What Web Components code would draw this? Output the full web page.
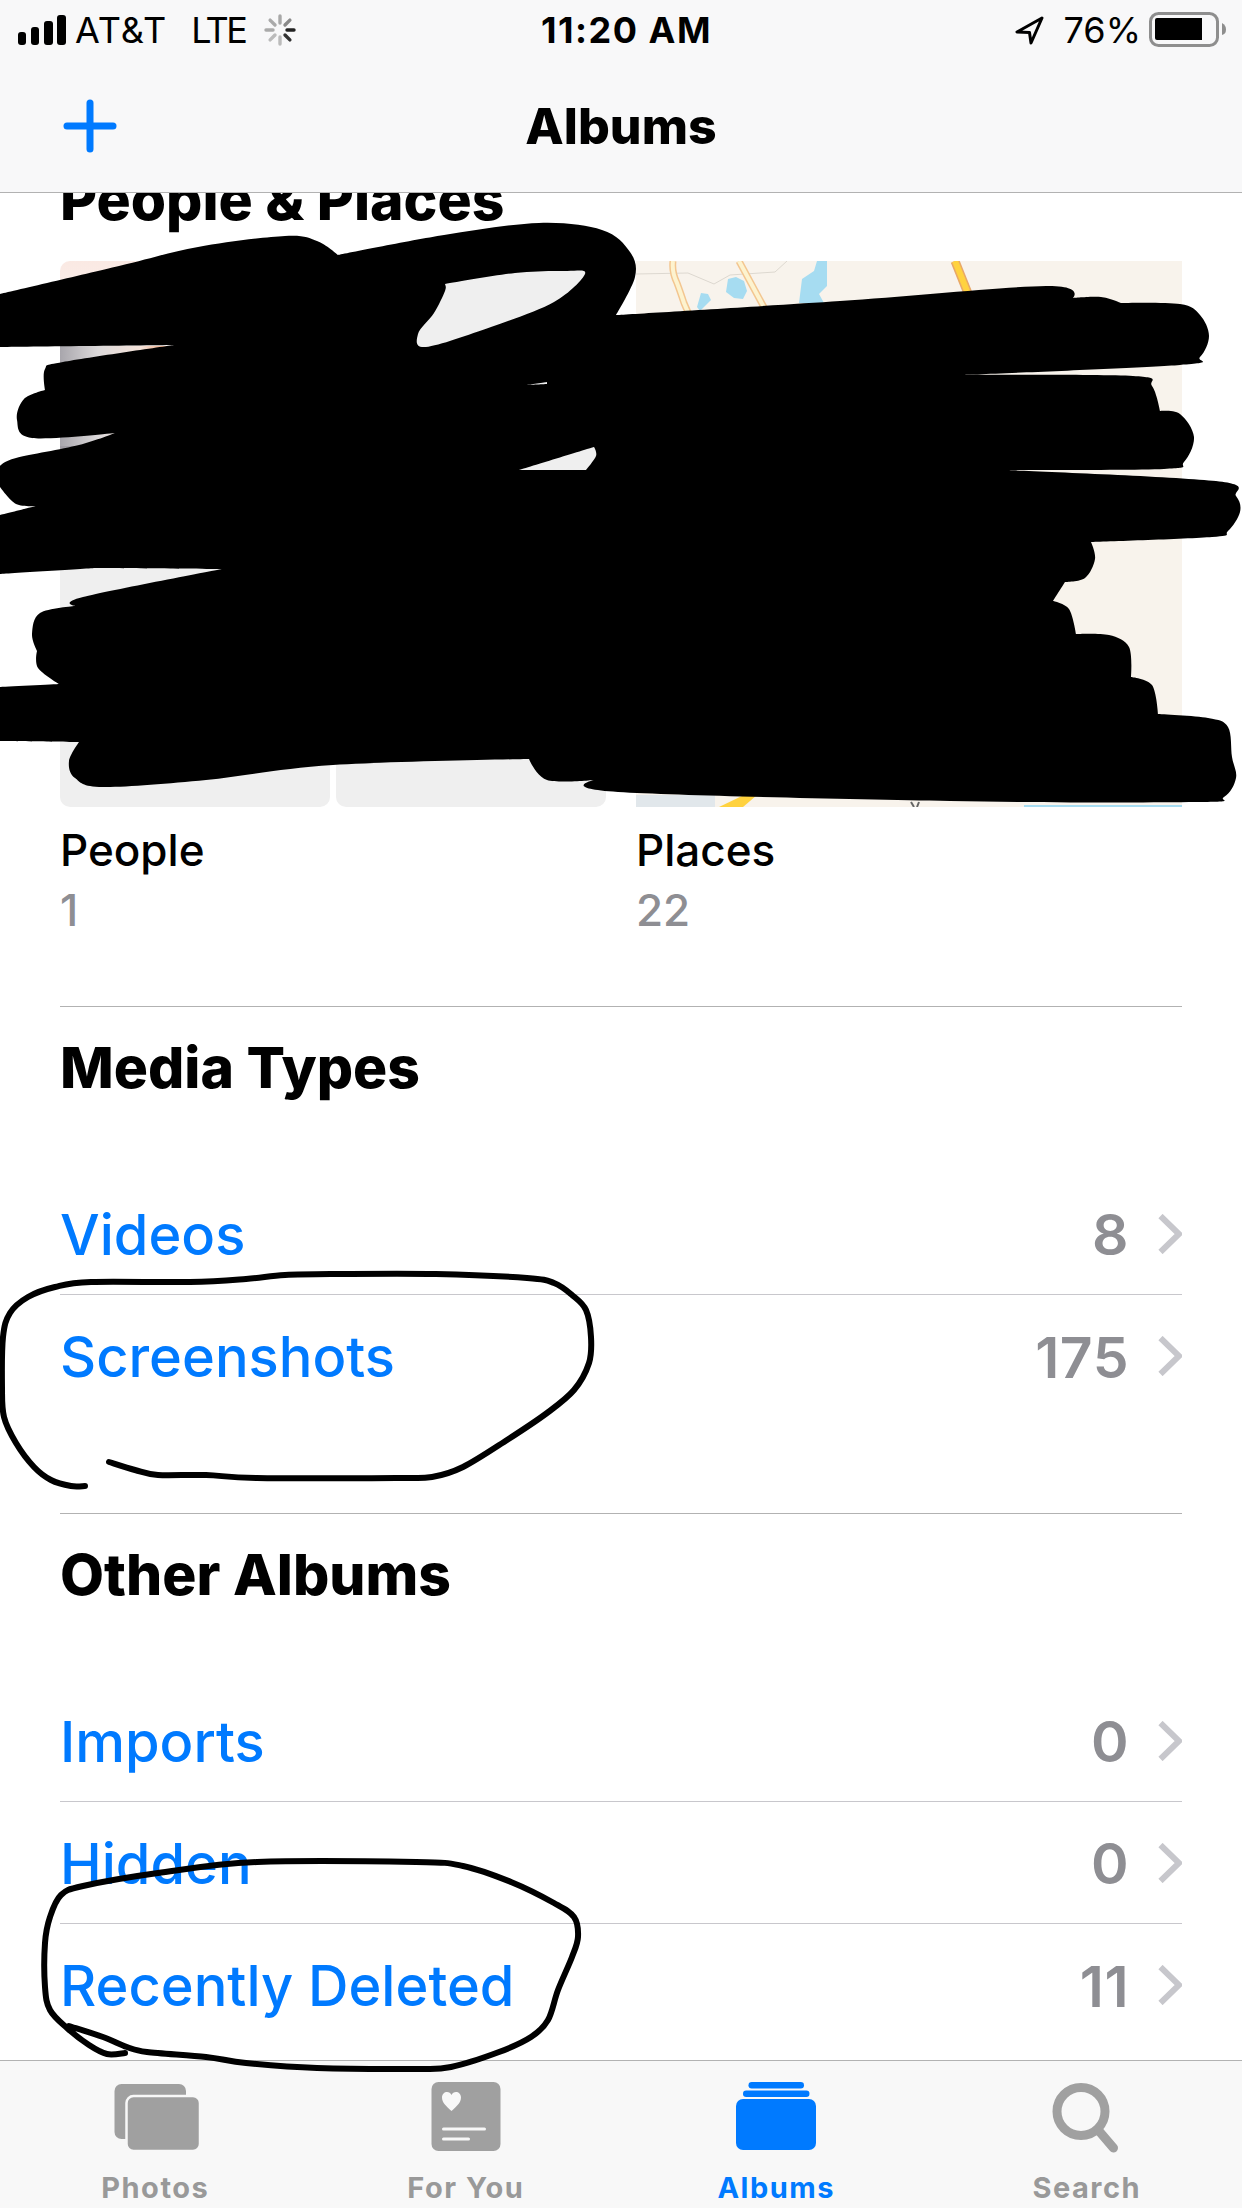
<!DOCTYPE html>
<html lang="en">
<head>
<meta charset="utf-8">
<title>Albums</title>
<style>
    html, body { margin: 0; padding: 0; background: #fff; }
    body { width: 1242px; height: 2208px; overflow: hidden; position: relative; display: flex; flex-direction: column; font-family: Inter, "Liberation Sans", sans-serif; }
</style>
</head>
<body>
<app-header>Albums</app-header>

<album-list>
    <album-group heading="People &amp; Places" first>
        <album-card name="People" count="1"><people-thumb></people-thumb></album-card>
        <album-card name="Places" count="22"><map-thumb></map-thumb></album-card>
    </album-group>
    <album-rows heading="Media Types" class="media">
        <album-row name="Videos" count="8"></album-row>
        <album-row name="Screenshots" count="175" last></album-row>
    </album-rows>
    <album-rows heading="Other Albums">
        <album-row name="Imports" count="0"></album-row>
        <album-row name="Hidden" count="0"></album-row>
        <album-row name="Recently Deleted" count="11" last></album-row>
    </album-rows>
</album-list>

<tab-bar>
    <tab-item label="Photos">
        <svg width="100" height="72" viewBox="0 0 100 72">
            <rect x="9.5" y="3" width="71.5" height="55" rx="7" fill="#a0a0a0"/>
            <rect x="21.5" y="15" width="73.5" height="55" rx="7" fill="#a0a0a0" stroke="#f8f8f8" stroke-width="2.5"/>
        </svg>
    </tab-item>
    <tab-item label="For You">
        <svg width="100" height="72" viewBox="0 0 100 72">
            <rect x="15.5" y="1" width="69" height="69" rx="7" fill="#a0a0a0"/>
            <path d="M35.500 30 C30 25 26 21.500 26 16.500 C26 13 28.500 11 31 11 C33 11 34.700 12 35.500 14 C36.300 12 38 11 40 11 C42.500 11 45 13 45 16.500 C45 21.500 41 25 35.500 30 Z" fill="#f8f8f8"/>
            <rect x="26" y="46.500" width="44" height="3" rx="1.500" fill="#f8f8f8"/>
            <rect x="26" y="56.500" width="28" height="3" rx="1.500" fill="#f8f8f8"/>
        </svg>
    </tab-item>
    <tab-item label="Albums" active>
        <svg width="100" height="72" viewBox="0 0 100 72">
            <rect x="22.500" y="1" width="55.500" height="6.500" rx="3.200" fill="#007aff"/>
            <rect x="17" y="9.500" width="66.500" height="6.500" rx="3.200" fill="#007aff"/>
            <rect x="10" y="18" width="80" height="51" rx="7" fill="#007aff"/>
        </svg>
    </tab-item>
    <tab-item label="Search">
        <svg width="100" height="72" viewBox="0 0 100 72">
            <circle cx="44" cy="30.500" r="24" fill="none" stroke="#a0a0a0" stroke-width="9"/>
            <path d="M62 50 L76.500 67" fill="none" stroke="#a0a0a0" stroke-width="9" stroke-linecap="round"/>
        </svg>
    </tab-item>
</tab-bar>

<ink-overlay></ink-overlay>

<script>
const headerTpl = document.createElement('template');
headerTpl.innerHTML = `
    <style>
        :host { display: block; flex: none; height: 192px; background: #f8f8f9; border-bottom: 1px solid #b2b2b2; color: #000; position: relative; z-index: 2; }
        .status { height: 60px; display: grid; grid-template-columns: 1fr auto 1fr; align-items: center; padding: 0 15px 0 18px; font-size: 36px; }
        .left, .right { display: flex; align-items: center; }
        .right { justify-content: flex-end; }
        .carrier { margin-left: 9px; letter-spacing: 1px; }
        .lte { margin-left: 24px; letter-spacing: -2.500px; }
        .spinner { margin-left: 19px; }
        .time { font-weight: 700; letter-spacing: 1.500px; margin-left: 8px; }
        .arrow { margin-right: 20px; }
        .battery { margin-left: 8px; }
        .nav { height: 132px; display: grid; grid-template-columns: 1fr auto 1fr; align-items: center; }
        .plus { margin-left: 63px; display: block; }
        h1 { margin: 0; font-size: 50px; font-weight: 800; }
    </style>
    <div class="status">
        <div class="left">
            <svg width="48" height="30" viewBox="0 0 48 30" fill="#000">
                <rect x="0" y="17" width="8" height="13" rx="3"/>
                <rect x="13" y="12" width="8" height="18" rx="3"/>
                <rect x="26" y="6" width="9" height="24" rx="3"/>
                <rect x="39" y="0" width="9" height="30" rx="3"/>
            </svg>
            <span class="carrier">AT&amp;T</span>
            <span class="lte">LTE</span>
            <svg class="spinner" width="32" height="32" viewBox="0 0 32 32" stroke-width="3.400" stroke-linecap="round">
                <path d="M16 2 V9" stroke="#a8a8a8"/>
                <path d="M25.900 6.100 L21 11" stroke="#8a8a8a"/>
                <path d="M30 16 H23" stroke="#222"/>
                <path d="M25.900 25.900 L21 21" stroke="#333"/>
                <path d="M16 30 V23" stroke="#bbb"/>
                <path d="M6.100 25.900 L11 21" stroke="#bbb"/>
                <path d="M2 16 H9" stroke="#aaa"/>
                <path d="M6.100 6.100 L11 11" stroke="#aaa"/>
            </svg>
        </div>
        <span class="time">11:20 AM</span>
        <div class="right">
            <svg class="arrow" width="29" height="29" viewBox="0 0 29 29">
                <path d="M27 2 L2 16 L14.500 16.500 L16 27 Z" fill="none" stroke="#000" stroke-width="3" stroke-linejoin="round"/>
            </svg>
            <span>76%</span>
            <svg class="battery" width="78" height="36" viewBox="0 0 78 36">
                <rect x="1.500" y="1.500" width="67" height="32" rx="8" fill="none" stroke="#8e8e8e" stroke-width="3"/>
                <path d="M8 6 H53 V28 H8 Q6 28 6 26 V8 Q6 6 8 6 Z" fill="#000"/>
                <path d="M73 11 Q77 13 77 17.500 Q77 22 73 23 Z" fill="#8e8e8e"/>
            </svg>
        </div>
    </div>
    <div class="nav">
        <svg class="plus" width="54" height="54" viewBox="0 0 54 54" stroke="#007aff" stroke-width="7" stroke-linecap="round">
            <path d="M27 4 V50"/><path d="M4 27 H50"/>
        </svg>
        <h1><slot></slot></h1>
        <span></span>
    </div>
`;

class AppHeader extends HTMLElement {
    constructor()
    {
        super();
        this.attachShadow({mode: 'open'}).appendChild(headerTpl.content.cloneNode(true));
    }
}

const listTpl = document.createElement('template');
listTpl.innerHTML = `
    <style>
        :host { display: block; flex: 1; min-height: 0; overflow: hidden; background: #fff; }
        .scroller { margin-top: -23px; padding: 0 60px; }
    </style>
    <div class="scroller"><slot></slot></div>
`;

class AlbumList extends HTMLElement {
    constructor()
    {
        super();
        this.attachShadow({mode: 'open'}).appendChild(listTpl.content.cloneNode(true));
    }
}

const groupTpl = document.createElement('template');
groupTpl.innerHTML = `
    <style>
        :host { display: block; height: 836px; border-bottom: 1px solid #b2b2b2; box-sizing: content-box; }
        h2 { margin: 0; height: 63px; line-height: 60px; font-size: 57px; font-weight: 800; color: #000; }
        .cards { display: grid; grid-template-columns: 546px 546px; column-gap: 30px; margin-top: 28px; }
    </style>
    <h2></h2>
    <div class="cards"><slot></slot></div>
`;

class AlbumGroup extends HTMLElement {
    constructor()
    {
        super();
        this.attachShadow({mode: 'open'}).appendChild(groupTpl.content.cloneNode(true));
        this.shadowRoot.querySelector('h2').textContent = this.getAttribute('heading');
    }
}

const cardTpl = document.createElement('template');
cardTpl.innerHTML = `
    <style>
        :host { display: block; }
        .thumb { height: 546px; }
        .name, .count { font-size: 44px; line-height: 59px; font-weight: 500; }
        .name { color: #000; margin-top: 14px; }
        .count { color: #8e8e93; margin-top: 1px; }
    </style>
    <div class="thumb"><slot></slot></div>
    <div class="name"></div>
    <div class="count"></div>
`;

class AlbumCard extends HTMLElement {
    constructor()
    {
        super();
        this.attachShadow({mode: 'open'}).appendChild(cardTpl.content.cloneNode(true));
        this.shadowRoot.querySelector('.name').textContent = this.getAttribute('name');
        this.shadowRoot.querySelector('.count').textContent = this.getAttribute('count');
    }
}

const peopleTpl = document.createElement('template');
peopleTpl.innerHTML = `
    <style>
        :host { display: grid; grid-template-columns: 270px 270px; grid-template-rows: 270px 270px; gap: 6px; }
        div { background: #efefef; border-radius: 10px; }
        .face {
            background:
                linear-gradient(180deg, #fae9e3, #fdf8f6) 0 0 / 100% 85px no-repeat,
                linear-gradient(90deg, #a8a6ac 0, #dcd9da 14%, #f5e3da 30%, #eeb08e 38%, #efefef 60%) 0 85px / 100% 100px no-repeat,
                linear-gradient(90deg, #9f9ca3, #c0bec4) 0 185px / 100% 85px no-repeat,
                #efefef;
        }
    </style>
    <div class="face"></div><div></div><div></div><div></div>
`;

class PeopleThumb extends HTMLElement {
    constructor()
    {
        super();
        this.attachShadow({mode: 'open'}).appendChild(peopleTpl.content.cloneNode(true));
    }
}

const mapTpl = document.createElement('template');
mapTpl.innerHTML = `
    <style>
        :host { display: block; height: 546px; background: #f8f3ec; }
        svg { display: block; }
    </style>
    <svg width="546" height="546" viewBox="0 0 546 546" fill="none">
        <path d="M0 13 L52 12 L78 23 L94 14 L139 11 L151 0" stroke="#ddd8d0" stroke-width="1"/>
        <path d="M37 0 C36 8 38 16 41 22 C44 30 46 36 48 42 L54 56" stroke="#f3c690" stroke-width="7"/>
        <path d="M37 0 C36 8 38 16 41 22 C44 30 46 36 48 42 L54 56" stroke="#fdf3cf" stroke-width="4"/>
        <path d="M103 0 L130 50" stroke="#f3c690" stroke-width="7"/>
        <path d="M103 0 L130 50" stroke="#fdf3cf" stroke-width="4"/>
        <path d="M319 0 L335 40" stroke="#e8a868" stroke-width="9"/>
        <path d="M319 0 L335 40" stroke="#ffd23f" stroke-width="6"/>
        <path d="M181 0 H191 V25 L183 33 L188 42 H163 L166 18 L178 10 Z" fill="#a6dcf1"/>
        <path d="M92 18 L100 16 L108 20 L111 30 L107 38 L98 37 L90 31 Z" fill="#a6dcf1"/>
        <path d="M65 32 L72 33 L75 39 L69 45 L64 50 L61 46 Z" fill="#a6dcf1"/>
        <rect x="0" y="534" width="79" height="12" fill="#e1e7eb"/>
        <path d="M83 546 L108 534 L121 534 L107 546 Z" fill="#ffd23f"/>
        <rect x="388" y="544" width="158" height="2" fill="#a6dcf1"/>
        <path d="M275 541 L278 546 M283 541 L281 546" stroke="#666" stroke-width="2"/>
    </svg>
`;

class MapThumb extends HTMLElement {
    constructor()
    {
        super();
        this.attachShadow({mode: 'open'}).appendChild(mapTpl.content.cloneNode(true));
    }
}

const rowsTpl = document.createElement('template');
rowsTpl.innerHTML = `
    <style>
        :host { display: block; }
        h2 { margin: 0; height: 166px; padding-top: 27px; box-sizing: border-box; line-height: 68px; font-size: 57px; font-weight: 800; color: #000; }
    </style>
    <h2></h2>
    <slot></slot>
`;

class AlbumRows extends HTMLElement {
    constructor()
    {
        super();
        this.attachShadow({mode: 'open'}).appendChild(rowsTpl.content.cloneNode(true));
        this.shadowRoot.querySelector('h2').textContent = this.getAttribute('heading');
        if (this.classList.contains('media')) {
            // the section rule sits 96px under the last row
            this.style.cssText = 'display:block;height:506px;border-bottom:1px solid #b2b2b2';
        }
    }
}

const rowTpl = document.createElement('template');
rowTpl.innerHTML = `
    <style>
        :host { display: flex; height: 122px; box-sizing: border-box; border-bottom: 1px solid #c8c7cc; align-items: center; font-size: 56px; font-weight: 500; }
        :host([last]) { border-bottom: 0; }
        .name { flex: 1; color: #007aff; padding-top: 2px; }
        .count { color: #8e8e93; font-size: 57px; font-weight: 600; letter-spacing: 0.500px; padding-top: 2px; }
        svg { margin-left: 29px; flex: none; }
    </style>
    <span class="name"></span>
    <span class="count"></span>
    <svg width="24" height="40" viewBox="0 0 24 40" fill="none"><path d="M2.500 2 L21 20 L2.500 38" stroke="#c7c7cc" stroke-width="6"/></svg>
`;

class AlbumRow extends HTMLElement {
    constructor()
    {
        super();
        this.attachShadow({mode: 'open'}).appendChild(rowTpl.content.cloneNode(true));
        this.shadowRoot.querySelector('.name').textContent = this.getAttribute('name');
        this.shadowRoot.querySelector('.count').textContent = this.getAttribute('count');
    }
}

const tabBarTpl = document.createElement('template');
tabBarTpl.innerHTML = `
    <style>
        :host { display: grid; grid-template-columns: repeat(4, 1fr); flex: none; height: 148px; box-sizing: border-box; background: #f8f8f8; border-top: 1px solid #b2b2b2; position: relative; z-index: 2; }
    </style>
    <slot></slot>
`;

class TabBar extends HTMLElement {
    constructor()
    {
        super();
        this.attachShadow({mode: 'open'}).appendChild(tabBarTpl.content.cloneNode(true));
    }
}

const tabTpl = document.createElement('template');
tabTpl.innerHTML = `
    <style>
        :host { display: flex; flex-direction: column; align-items: center; padding-top: 20px; color: #999; font-size: 29px; font-weight: 700; letter-spacing: 1.500px; }
        :host([active]) { color: #007aff; }
        ::slotted(svg) { display: block; }
        .label { line-height: 34px; margin-top: 18px; }
    </style>
    <slot></slot>
    <span class="label"></span>
`;

class TabItem extends HTMLElement {
    constructor()
    {
        super();
        this.attachShadow({mode: 'open'}).appendChild(tabTpl.content.cloneNode(true));
        this.shadowRoot.querySelector('.label').textContent = this.getAttribute('label');
    }
}

// Marker ink drawn on top of the screenshot, page coordinates. A third value marks a sharp notch.
const inkBlob = [[0,294,1],[119,266],[198,247],[285,236],[317,241],[338,255,1],[444,235],[539,223],[602,230],[630,252],[635,277],[616,315,1],[840,301],[1046,286],[1073,298,1],[1101,297],[1121,303,1],[1180,304],[1200,315],[1209,336],[1200,357],[1180,365],[962,375,1],[1133,376],[1152,386],[1160,411,1],[1180,414],[1194,437],[1184,462],[1164,469],[1006,470,1],[1216,481],[1236,496],[1240,512],[1228,531],[1212,537],[1091,542,1],[1095,559],[1085,578],[1065,582,1],[1053,601,1],[1069,609],[1076,634,1],[1109,635],[1129,647],[1131,677,1],[1152,685],[1158,714,1],[1208,718],[1228,727],[1232,757],[1236,778],[1224,797],[1196,802],[950,801],[618,792],[594,780,1],[547,780],[529,759,1],[333,765],[206,780],[103,787],[75,778],[69,761],[79,742,1],[0,741,1],[0,687,1],[59,684,1],[38,668],[37,651,1],[32,634],[40,613],[75,606,1],[83,597],[222,569,1],[95,568,1],[0,574,1],[0,515,1],[36,506,1],[16,504],[0,487,1],[0,466,1],[16,458],[79,445],[115,433,1],[32,438],[17,420],[24,399],[45,390,1],[45,369],[63,362],[174,345,1],[0,347,1]];
const inkHoles = [
    [[445,284],[515,273],[566,271],[585,274],[554,302],[491,327],[426,347],[418,334],[434,313],[445,291],[445,284]],
    [[519,470,1],[594,447,1],[596,456],[586,470,1],[519,470,1]],
    [[527,385,1],[547,382,1],[547,384,1],[527,385,1]]
];
const ringShots = [[85,1486],[71,1486],[51,1480],[34,1467],[16,1443],[4,1417],[2,1387],[3,1337],[10,1313],[28,1297],[55,1287],[91,1282],[190,1282],[246,1279],[285,1275],[337,1274],[436,1274],[527,1278],[554,1283],[572,1295],[586,1310],[591,1337],[589,1363],[574,1390],[547,1413],[507,1440],[463,1467],[432,1477],[396,1478],[257,1478],[206,1475],[158,1475],[135,1470],[109,1462]];
const ringDeleted = [[125,2053],[107,2054],[89,2045],[67,2028],[50,2010],[45,1987],[45,1943],[50,1917],[61,1895],[83,1886],[158,1873],[257,1862],[416,1862],[463,1866],[511,1882],[554,1903],[574,1917],[578,1937],[572,1957],[558,1990],[548,2020],[531,2037],[499,2052],[451,2067],[416,2069],[317,2068],[246,2063],[206,2057],[147,2052],[127,2047],[103,2037],[69,2026]];

const smooth = pts => {
    let d = `M${pts[0][0]} ${pts[0][1]}`;
    for (let i = 0; i < pts.length - 1; i++) {
        const p0 = pts[i - 1] || pts[i], p1 = pts[i], p2 = pts[i + 1], p3 = pts[i + 2] || p2;
        const c1 = p1[2] ? p1 : [p1[0] + (p2[0] - p0[0]) / 6, p1[1] + (p2[1] - p0[1]) / 6];
        const c2 = p2[2] ? p2 : [p2[0] - (p3[0] - p1[0]) / 6, p2[1] - (p3[1] - p1[1]) / 6];
        d += ` C${c1[0]} ${c1[1]} ${c2[0]} ${c2[1]} ${p2[0]} ${p2[1]}`;
    }
    return d;
};

class InkOverlay extends HTMLElement {
    constructor()
    {
        super();
        this.attachShadow({mode: 'open'}).innerHTML = `
            <style>
                :host { display: block; position: absolute; left: 0; top: 0; width: 1242px; height: 2208px; z-index: 3; pointer-events: none; }
                svg { display: block; }
            </style>
            <svg width="1242" height="2208" viewBox="0 0 1242 2208" fill="none">
                <path d="${smooth(inkBlob)} Z ${inkHoles.map(h => smooth(h) + ' Z').join(' ')}" fill="#000" fill-rule="evenodd"/>
                <path d="${smooth(ringShots)}" stroke="#000" stroke-width="6" stroke-linecap="round" stroke-linejoin="round"/>
                <path d="${smooth(ringDeleted)}" stroke="#000" stroke-width="6" stroke-linecap="round" stroke-linejoin="round"/>
            </svg>`;
    }
}

customElements.define('app-header', AppHeader);
customElements.define('album-list', AlbumList);
customElements.define('album-group', AlbumGroup);
customElements.define('album-card', AlbumCard);
customElements.define('people-thumb', PeopleThumb);
customElements.define('map-thumb', MapThumb);
customElements.define('album-rows', AlbumRows);
customElements.define('album-row', AlbumRow);
customElements.define('tab-bar', TabBar);
customElements.define('tab-item', TabItem);
customElements.define('ink-overlay', InkOverlay);
</script>
</body>
</html>
